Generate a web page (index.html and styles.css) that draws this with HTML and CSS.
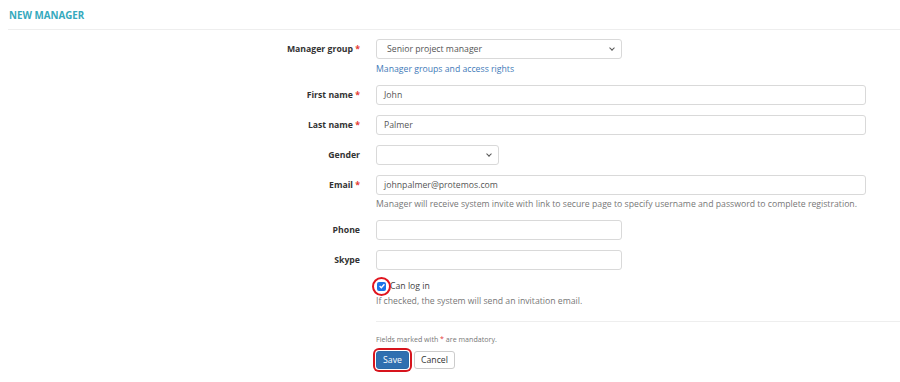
FILE: index.html
```html
<!DOCTYPE html>
<html lang="en">
<head>
  <meta charset="UTF-8">
  <title>New manager</title>
  <link rel="stylesheet" href="styles.css">
</head>
<body>

  <!-- Title -->
  <div class="page-title">New manager</div>

  <!-- Form -->
  <form class="form">
    <div class="row">
      <label class="label">Manager group <span class="req">*</span></label>
      <div class="field">
        <div class="select select-md">Senior project manager</div>
        <a class="help-link" href="#">Manager groups and access rights</a>
      </div>
    </div>

    <div class="row">
      <label class="label">First name <span class="req">*</span></label>
      <div class="field"><div class="input">John</div></div>
    </div>

    <div class="row">
      <label class="label">Last name <span class="req">*</span></label>
      <div class="field"><div class="input">Palmer</div></div>
    </div>

    <div class="row">
      <label class="label">Gender</label>
      <div class="field"><div class="select select-sm"></div></div>
    </div>

    <div class="row">
      <label class="label">Email <span class="req">*</span></label>
      <div class="field">
        <div class="input">johnpalmer@protemos.com</div>
        <p class="help">Manager will receive system invite with link to secure page to specify username and password to complete registration.</p>
      </div>
    </div>

    <div class="row">
      <label class="label">Phone</label>
      <div class="field"><div class="input input-md"></div></div>
    </div>

    <div class="row">
      <label class="label">Skype</label>
      <div class="field"><div class="input input-md"></div></div>
    </div>

    <div class="row">
      <div></div>
      <div class="field">
        <div class="check-line">
          <span class="checkbox">
            <svg width="8" height="8" viewBox="0 0 8 8"><path d="M1.6 4.1 L3.3 5.7 L6.4 2.2" fill="none" stroke="#fff" stroke-width="1.4"/></svg>
          </span>
          Can log in
        </div>
        <p class="help">If checked, the system will send an invitation email.</p>
      </div>
    </div>

    <!-- Footer -->
    <div class="row">
      <div></div>
      <div class="form-footer">
        <p class="note">Fields marked with <span class="req">*</span> are mandatory.</p>
        <div class="buttons">
          <button type="button" class="btn btn-save">Save</button>
          <button type="button" class="btn btn-cancel">Cancel</button>
        </div>
      </div>
    </div>
  </form>

</body>
</html>
```

FILE: styles.css
```css
body {
  margin: 0;
  font-family: 'Open Sans', 'Liberation Sans', sans-serif;
  font-size: 8.7px;
  color: #333;
  background: #fff;
}

/* Title */
.page-title {
  margin-left: 8px;
  padding: 10px 1px 7px;
  border-bottom: 1px solid #eee;
  font-size: 9.8px;
  font-weight: 700;
  text-transform: uppercase;
  color: #35a9bd;
  line-height: 12px;
}

/* Form */
.form {
  padding-top: 9px;
}

.row {
  display: grid;
  grid-template-columns: 360px 1fr;
  gap: 16px;
  margin-bottom: 10px;
}

.label {
  text-align: right;
  font-weight: 700;
  line-height: 20px;
  color: #333;
}

.req {
  color: #e53935;
}

.field {
  padding-right: 34px;
}

.input,
.select {
  box-sizing: border-box;
  height: 20px;
  border: 1px solid #d9d9d9;
  border-radius: 3px;
  padding: 0 7px;
  line-height: 18px;
  color: #555;
  background: #fff;
  position: relative;
}

.select {
  padding-left: 10px;
}

.input-md,
.select-md {
  width: 246px;
}

.select-sm {
  width: 123px;
}

.select::after {
  content: "";
  position: absolute;
  right: 7px;
  top: 6px;
  width: 3px;
  height: 3px;
  border-right: 1.4px solid #555;
  border-bottom: 1.4px solid #555;
  transform: rotate(45deg);
}

.help-link {
  display: block;
  margin-top: 4px;
  line-height: 12px;
  color: #3f7ab8;
  text-decoration: none;
}

.help {
  margin: 3px 0 0;
  color: #777;
  line-height: 12px;
}

/* Checkbox */
.check-line {
  display: flex;
  align-items: center;
  gap: 4px;
  height: 12px;
  color: #444;
}

.checkbox {
  display: flex;
  align-items: center;
  justify-content: center;
  width: 9px;
  height: 9px;
  margin-left: 1px;
  background: #1a73e8;
  border-radius: 2px;
  position: relative;
}

.checkbox::after {
  content: "";
  position: absolute;
  left: -5px;
  top: -5px;
  width: 15px;
  height: 15px;
  border: 2px solid #e0141e;
  border-radius: 50%;
}

/* Footer */
.form-footer {
  border-top: 1px solid #eee;
  margin-top: 4px;
  padding-top: 12px;
}

.note {
  margin: 0 0 6px;
  font-size: 7.1px;
  line-height: 11px;
  color: #777;
}

.buttons {
  display: flex;
  gap: 5px;
}

.btn {
  font-family: inherit;
  font-size: 8.7px;
  height: 18px;
  padding: 0 7px;
  border-radius: 3px;
  cursor: pointer;
}

.btn-save {
  width: 33px;
  padding: 0;
  background: #2f6fb0;
  color: #fff;
  border: 1px solid #2a6aa8;
  box-shadow: 0 0 0 1px #fff, 0 0 0 3px #d7141d;
}

.btn-cancel {
  width: 41px;
  padding: 0;
  background: #fff;
  color: #333;
  border: 1px solid #ccc;
}
```
